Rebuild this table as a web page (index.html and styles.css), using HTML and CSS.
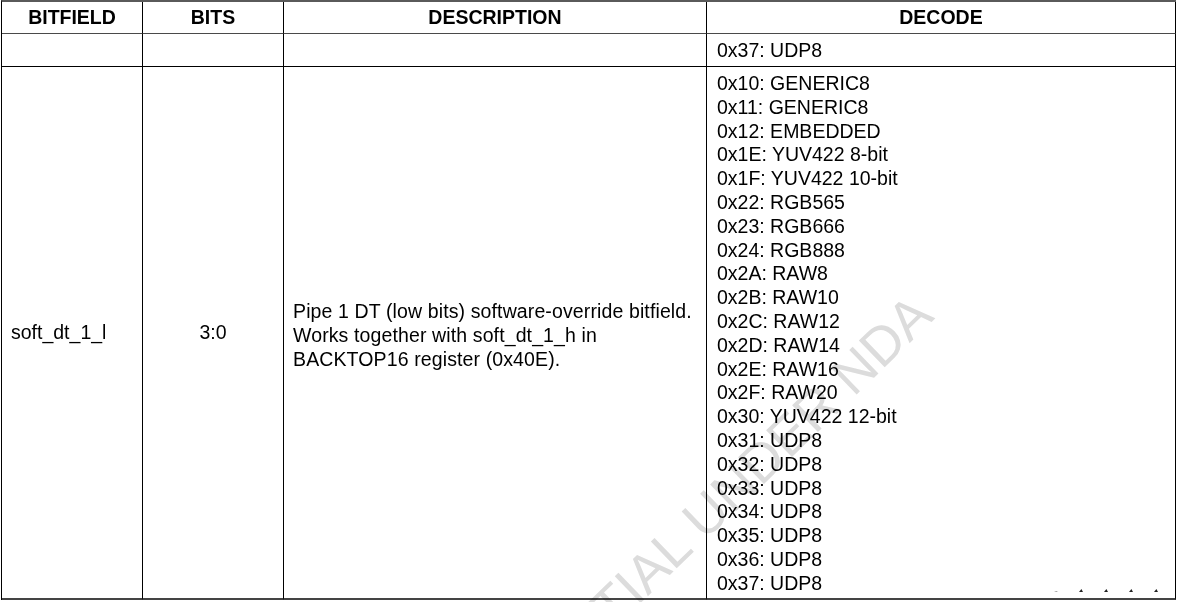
FILE: index.html
```html
<!DOCTYPE html>
<html>
<head>
<meta charset="utf-8">
<link rel="stylesheet" href="styles.css">
</head>
<body>
<div class="sheet">
  <div class="regtable">
    <div class="cell head">BITFIELD</div>
    <div class="cell head">BITS</div>
    <div class="cell head">DESCRIPTION</div>
    <div class="cell head">DECODE</div>

    <div class="cell row1"></div>
    <div class="cell row1"></div>
    <div class="cell row1"></div>
    <div class="cell row1 decode-one">0x37: UDP8</div>

    <div class="cell row2 name">soft_dt_1_l</div>
    <div class="cell row2 bits">3:0</div>
    <div class="cell row2 desc">Pipe 1 DT (low bits) software-override bitfield.<br>Works together with soft_dt_1_h in<br>BACKTOP16 register (0x40E).</div>
    <div class="cell row2 decode">
      <div>0x10: GENERIC8</div>
      <div>0x11: GENERIC8</div>
      <div>0x12: EMBEDDED</div>
      <div>0x1E: YUV422 8-bit</div>
      <div>0x1F: YUV422 10-bit</div>
      <div>0x22: RGB565</div>
      <div>0x23: RGB666</div>
      <div>0x24: RGB888</div>
      <div>0x2A: RAW8</div>
      <div>0x2B: RAW10</div>
      <div>0x2C: RAW12</div>
      <div>0x2D: RAW14</div>
      <div>0x2E: RAW16</div>
      <div>0x2F: RAW20</div>
      <div>0x30: YUV422 12-bit</div>
      <div>0x31: UDP8</div>
      <div>0x32: UDP8</div>
      <div>0x33: UDP8</div>
      <div>0x34: UDP8</div>
      <div>0x35: UDP8</div>
      <div>0x36: UDP8</div>
      <div>0x37: UDP8</div>
    </div>
  </div>
  <div class="watermark">CONFIDENTIAL UNDER NDA</div>
  <div class="marks">
    <span class="mark faint"></span>
    <span class="mark"></span>
    <span class="mark"></span>
    <span class="mark"></span>
    <span class="mark"></span>
  </div>
</div>
</body>
</html>
```
FILE: styles.css
```css
html, body {
  margin: 0;
  padding: 0;
  background: #fff;
}
.sheet {
  position: relative;
  width: 1178px;
  height: 602px;
  overflow: hidden;
  font-family: "Liberation Sans", Arial, sans-serif;
  font-size: 19.5px;
  color: #000;
}
.regtable {
  display: grid;
  grid-template-columns: 141px 141px 423px 469px;
  width: max-content;
  margin-left: 1px;
  border-left: 1px solid #000;
  border-top: 2px solid #5a5a5a;
}
.cell {
  box-sizing: border-box;
  border-right: 1px solid #000;
  border-bottom: 1px solid #000;
  white-space: nowrap;
}
.head {
  height: 32px;
  display: flex;
  align-items: center;
  justify-content: center;
  font-weight: bold;
  border-bottom-color: #4a4a4a;
}
.row1 {
  height: 33px;
  display: flex;
  align-items: center;
}
.decode-one {
  padding-left: 10px;
}
.row2 {
  height: 533px;
  border-bottom: 2px solid #444;
  display: flex;
  align-items: center;
}
.name {
  padding-left: 9px;
}
.bits {
  justify-content: center;
}
.desc {
  padding-left: 9px;
  line-height: 24px;
  padding-top: 4px;
  letter-spacing: 0.12px;
}
.decode {
  display: block;
  padding-left: 10px;
  padding-top: 5px;
  line-height: 23.8px;
}
.watermark {
  position: absolute;
  left: 211px;
  top: 270px;
  font-size: 54px;
  line-height: 54px;
  white-space: nowrap;
  color: #dcdcdc;
  transform: rotate(-44deg);
  transform-origin: right bottom;
  mix-blend-mode: multiply;
  pointer-events: none;
}
.marks {
  position: absolute;
  left: 1054px;
  top: 589px;
  display: flex;
  gap: 21px;
}
.mark {
  width: 4px;
  height: 3px;
  background: #222;
  clip-path: polygon(0 100%, 60% 0, 100% 100%);
}
.mark.faint {
  background: #999;
  height: 1px;
  margin-top: 2px;
}
```
